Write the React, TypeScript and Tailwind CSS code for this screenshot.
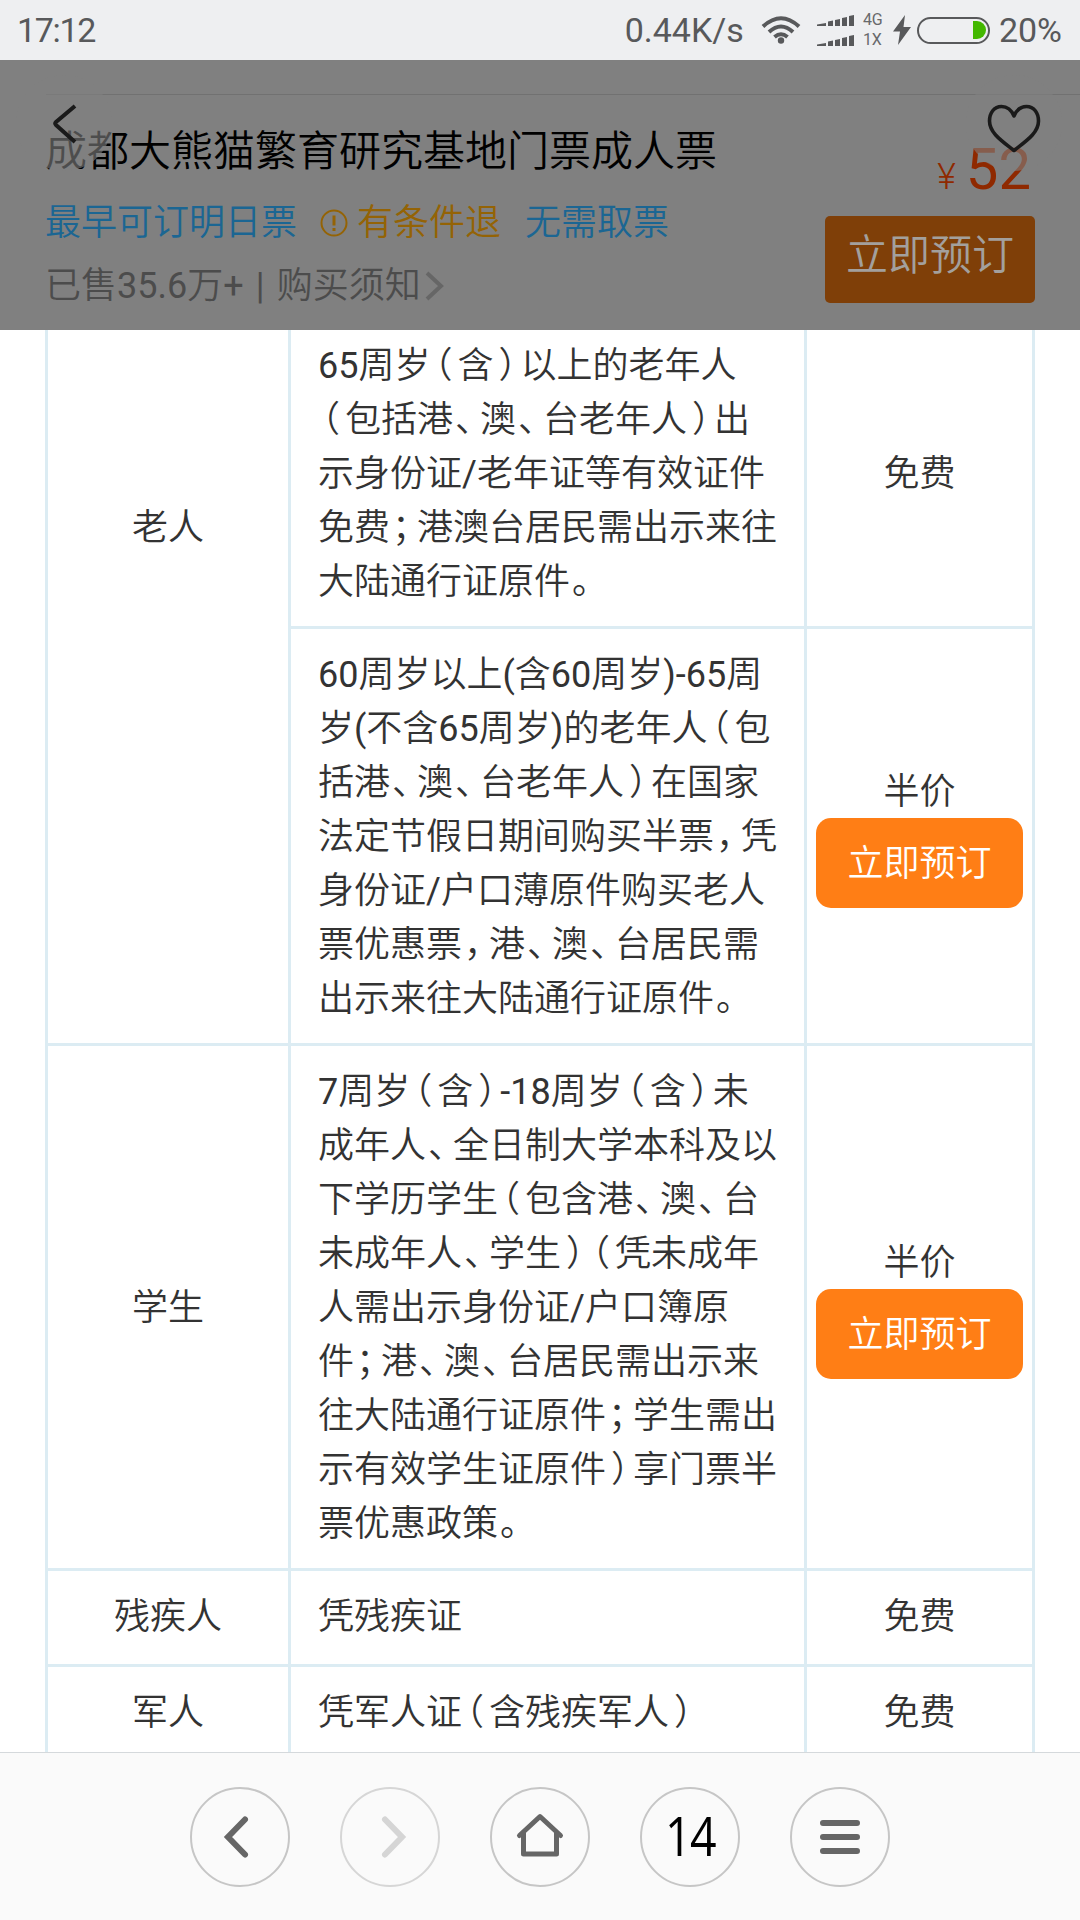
import React from "react";
import { clsx } from "clsx";

type Row = {
  lines: string[];
  price: string;
  bookable?: boolean;
};

type Group = {
  label: string;
  labelClass: string;
  rows: Row[];
};

const GROUPS: Group[] = [
  {
    label: "老人",
    labelClass: "items-start pt-[181px]",
    rows: [
      {
        lines: [
          "65周岁（含）以上的老年人",
          "（包括港、澳、台老年人）出",
          "示身份证/老年证等有效证件",
          "免费；港澳台居民需出示来往",
          "大陆通行证原件。",
        ],
        price: "免费",
      },
      {
        lines: [
          "60周岁以上(含60周岁)-65周",
          "岁(不含65周岁)的老年人（包",
          "括港、澳、台老年人）在国家",
          "法定节假日期间购买半票，凭",
          "身份证/户口薄原件购买老人",
          "票优惠票，港、澳、台居民需",
          "出示来往大陆通行证原件。",
        ],
        price: "半价",
        bookable: true,
      },
    ],
  },
  {
    label: "学生",
    labelClass: "items-center pt-[2px]",
    rows: [
      {
        lines: [
          "7周岁（含）-18周岁（含）未",
          "成年人、全日制大学本科及以",
          "下学历学生（包含港、澳、台",
          "未成年人、学生）（凭未成年",
          "人需出示身份证/户口簿原",
          "件；港、澳、台居民需出示来",
          "往大陆通行证原件；学生需出",
          "示有效学生证原件）享门票半",
          "票优惠政策。",
        ],
        price: "半价",
        bookable: true,
      },
    ],
  },
  {
    label: "残疾人",
    labelClass: "items-center pb-px",
    rows: [{ lines: ["凭残疾证"], price: "免费" }],
  },
  {
    label: "军人",
    labelClass: "items-center pb-px",
    rows: [{ lines: ["凭军人证（含残疾军人）"], price: "免费" }],
  },
];

// Full-width punctuation takes 27px instead of the whole 36px character cell,
// and the latin runs are one step heavier than the Chinese text
function Line({ text }: { text: string }) {
  return (
    <div className="h-[54px] whitespace-nowrap">
      {text.split(/([（）、，；。]|[\d()/-]+)/).map((part, i) => {
        if (/^[（）、，；。]$/.test(part)) {
          return (
            <span
              key={i}
              className={clsx(
                "inline-block w-[27px] [font-feature-settings:'halt']",
                part === "（" && "pl-[4px]",
                part === "）" && "pl-[5px]",
                /[、，；。]/.test(part) && "pl-[2px]"
              )}
            >
              {part}
            </span>
          );
        }
        if (/^[\d()/-]+$/.test(part)) {
          return <span key={i} className="font-normal">{part}</span>;
        }
        return part;
      })}
    </div>
  );
}

function StatusBar() {
  return (
    <div className="h-[60px] bg-[#eeeff1] flex items-center pl-[17px] pr-[18px] text-[34px] leading-[60px] font-normal text-[#58595b]">
      <span className="tracking-[-1.3px]">17:12</span>
      <span className="ml-auto">0.44K/s</span>
      <svg className="ml-[17px] w-[40px] h-[30px]" viewBox="0 0 40 30" fill="none" stroke="#58595b" strokeWidth="4">
        <path d="M2 11.500 Q20 -5 38 11.500" />
        <path d="M8 17 Q20 6 32 17" />
        <path d="M13.500 22 Q20 16.500 26.500 22" />
        <circle cx="20" cy="25.500" r="3.200" fill="#58595b" stroke="none" />
      </svg>
      <div className="ml-[16px] flex flex-col gap-[9px]">
        <SignalBars />
        <SignalBars />
      </div>
      <div className="ml-[8px] w-[24px] flex flex-col text-[16px] leading-[20px] text-[#68696b]">
        <span>4G</span>
        <span>1X</span>
      </div>
      <svg className="ml-[6px] w-[18px] h-[30px]" viewBox="0 0 18 30" fill="#58595b">
        <path d="M12 0 L0 16.500 H7 L5 30 L18 12 H10.500 Z" />
      </svg>
      <div className="ml-[6px] w-[73px] h-[27px] rounded-full border-2 border-[#58595b] flex items-center justify-end pr-[2px]">
        <div className="w-[13px] h-[18px] rounded-r-full bg-[#43b800]" />
      </div>
      <span className="ml-[9px] text-[34px]">20%</span>
    </div>
  );
}

function SignalBars() {
  return (
    <svg className="w-[38px] h-[11px]" viewBox="0 0 38 11" fill="#58595b">
      <path d="M0 9.500 L9 8 V11 H0Z M11 6.500 L16 5.500 V11 H11Z M18 5 L23 4 V11 H18Z M25 3 L30 2 V11 H25Z M32 1 L37 0 V11 H32Z" />
    </svg>
  );
}

function TicketHeader() {
  return (
    <header className="relative h-[270px] bg-[#808080] flex flex-col">
      <div className="mt-[34px] ml-[46px] h-px bg-[#717171]" />
      <div className="flex pl-[45px] pr-[45px]">
        <div className="flex-1 text-[36px]">
          <h1 className="mt-[30px] h-[54px] leading-[54px] text-[42px] text-black">成都大熊猫繁育研究基地门票成人票</h1>
          <div className="mt-[17px] h-[54px] leading-[54px] flex items-center text-[#1b6693]">
            <span>最早可订明日票</span>
            <svg className="ml-[23px] w-[28px] h-[28px]" viewBox="0 0 28 28" fill="none" stroke="#946305" strokeWidth="2">
              <circle cx="14" cy="14" r="12.500" />
              <path d="M14 6.500 V16.500 M14 19 V22" strokeWidth="3" />
            </svg>
            <span className="ml-[9px] text-[#946305]">有条件退</span>
            <span className="ml-[24px]">无需取票</span>
          </div>
          <div className="mt-[9px] h-[54px] leading-[54px] flex items-center text-[#4c4c4c]">
            <span>
              已售<span className="font-normal">35.6</span>万<span className="font-normal">+</span>
            </span>
            <span className="w-[33px] text-center font-normal">|</span>
            <span>购买须知</span>
            <svg className="ml-[4px] w-[20px] h-[30px]" viewBox="0 0 20 30" fill="none" stroke="#666" strokeWidth="4">
              <path d="M2 2 L16 15 L2 28" />
            </svg>
          </div>
        </div>
        <div className="w-[210px] flex flex-col items-end">
          <div className="mt-[40px] h-[67px] leading-[68px] flex items-baseline font-normal text-[#8f2900]">
            <span className="text-[36px] font-light">¥</span>
            <span className="ml-[10px] mr-[4px] text-[58px]">52</span>
          </div>
          <button className="mt-[14px] w-[210px] h-[87px] rounded-[5px] bg-[#7f3f08] pb-[8px] text-[42px] leading-[79px] text-[#a3a09d]">
            立即预订
          </button>
        </div>
      </div>

      {/* Floating back and favourite buttons */}
      <button className="absolute left-[16px] top-[15px] w-[96px] h-[96px] rounded-full bg-[#808080]/60">
        <svg viewBox="0 0 96 96" fill="none" stroke="#1a1a1a" strokeWidth="4">
          <path d="M59 31 L40 47 Q38.500 48.500 40 50 L59 67" />
        </svg>
      </button>
      <button className="absolute left-[966px] top-[15px] w-[96px] h-[96px] rounded-full bg-[#808080]/60">
        <svg viewBox="0 0 96 96" fill="none" stroke="#1a1a1a" strokeWidth="3.6" strokeLinejoin="round">
          <path d="M48 41 C45 34 40 31.500 35.500 31.500 C28 31.500 23.500 38 23.500 46 C23.500 58 36 66 48 75.500 C60 66 72.500 58 72.500 46 C72.500 38 68 31.500 60.500 31.500 C56 31.500 51 34 48 41 Z" />
        </svg>
      </button>
    </header>
  );
}

function PolicyTable() {
  return (
    <main className="h-[1422px] overflow-hidden bg-white">
      <div className="-mt-[10px] ml-[45px] w-[990px] border-l-[3px] border-[#dcecf3] text-[36px] leading-[54px] text-[#333]">
        {GROUPS.map((group) => (
          <div key={group.label} className="flex">
            <div
              className={clsx(
                "w-[243px] flex justify-center border-r-[3px] border-b-[3px] border-[#dcecf3]",
                group.labelClass
              )}
            >
              {group.label}
            </div>
            <div className="flex-1">
              {group.rows.map((row, i) => (
                <div key={i} className="flex min-h-[96px]">
                  <div className="w-[516px] pl-[27px] pt-[19px] pb-[17px] border-r-[3px] border-b-[3px] border-[#dcecf3]">
                    {row.lines.map((line) => (
                      <Line key={line} text={line} />
                    ))}
                  </div>
                  <div
                    className={clsx(
                      "w-[228px] flex flex-col items-center border-r-[3px] border-b-[3px] border-[#dcecf3]",
                      row.lines.length === 1 ? "pt-[19px]" : "justify-center"
                    )}
                  >
                    <span className={clsx(row.lines.length > 1 && "pt-px -mb-px")}>{row.price}</span>
                    {row.bookable && (
                      <button className="w-[207px] h-[90px] rounded-[15px] bg-[#ff7e15] text-white pt-px">立即预订</button>
                    )}
                  </div>
                </div>
              ))}
            </div>
          </div>
        ))}
      </div>
    </main>
  );
}

function NavButton({ disabled, children }: { disabled?: boolean; children: React.ReactNode }) {
  return (
    <button
      className={clsx(
        "w-[100px] h-[100px] rounded-full border-2 flex items-center justify-center",
        disabled ? "border-[#d6d6d6] text-[#d5d5d5]" : "border-[#c6c6c6] text-[#666]"
      )}
    >
      {children}
    </button>
  );
}

function BrowserBar() {
  return (
    <nav className="h-[168px] bg-[#fafafa] border-t border-[#d5d9dc] flex justify-center pt-[34px] gap-[50px]">
      <NavButton>
        <svg className="w-[96px] h-[96px] shrink-0" viewBox="0 0 96 96" fill="none" stroke="currentColor" strokeWidth="6" strokeLinecap="round">
          <path d="M53 30.500 L36 48 L53 65.500" />
        </svg>
      </NavButton>
      <NavButton disabled>
        <svg className="w-[96px] h-[96px] shrink-0" viewBox="0 0 96 96" fill="none" stroke="currentColor" strokeWidth="6" strokeLinecap="round">
          <path d="M43 30.500 L60 48 L43 65.500" />
        </svg>
      </NavButton>
      <NavButton>
        <svg className="w-[96px] h-[96px] shrink-0" viewBox="0 0 96 96" fill="none" stroke="currentColor" strokeWidth="5" strokeLinecap="round" strokeLinejoin="round">
          <path d="M27.500 46.500 L48 27.500 L68.500 46.500" />
          <path d="M31.500 44 V65 H64.500 V44" />
        </svg>
      </NavButton>
      <NavButton>
        <span className="inline-block -translate-y-[2px] scale-x-[0.86] font-['Open_Sans'] text-[54px] leading-none font-normal tracking-[-2px] text-black">
          14
        </span>
      </NavButton>
      <NavButton>
        <svg className="w-[96px] h-[96px] shrink-0" viewBox="0 0 96 96" fill="none" stroke="currentColor" strokeWidth="6" strokeLinecap="round">
          <path d="M31 34 H65 M31 48 H65 M31 62 H65" />
        </svg>
      </NavButton>
    </nav>
  );
}

export default function App() {
  return (
    <div className="w-[1080px] h-[1920px] overflow-hidden bg-white font-[Roboto,'Noto_Sans_CJK_SC',sans-serif] font-[350]">
      <StatusBar />
      <TicketHeader />
      <PolicyTable />
      <BrowserBar />
    </div>
  );
}
